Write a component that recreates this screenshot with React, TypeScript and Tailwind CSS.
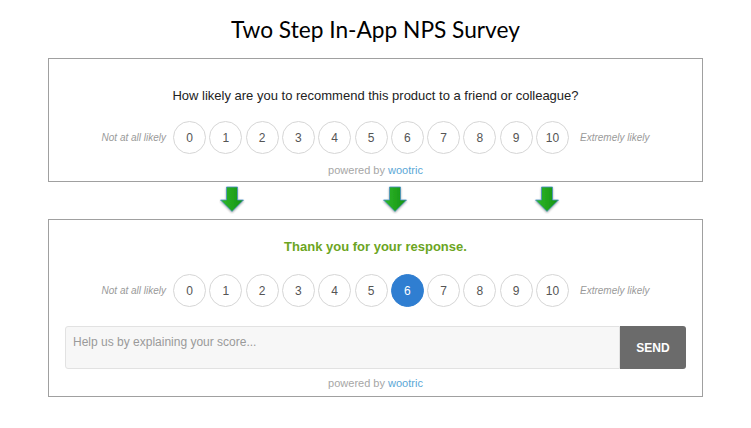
import React from "react";

const scores = [0, 1, 2, 3, 4, 5, 6, 7, 8, 9, 10];

function Scale({ selected }: { selected?: number }) {
  return (
    <div className="flex items-center justify-center">
      <span className="mr-[7px] text-[10px] italic text-[#9a9a9a]">Not at all likely</span>
      <div className="flex gap-[3.3px]">
        {scores.map((n) => (
          <div
            key={n}
            className={
              n === selected
                ? "flex h-[33px] w-[33px] items-center justify-center rounded-full border border-[#2f7ed1] bg-[#2f7ed1] text-[12px] text-white"
                : "flex h-[33px] w-[33px] items-center justify-center rounded-full border border-[#d6d6d6] bg-white text-[12px] text-[#555]"
            }
          >
            {n}
          </div>
        ))}
      </div>
      <span className="ml-[11px] text-[10px] italic text-[#9a9a9a]">Extremely likely</span>
    </div>
  );
}

function Powered() {
  return (
    <p className="text-center text-[11px] text-[#a6a6a6]">
      powered by <span className="text-[#5aa7d6]">wootric</span>
    </p>
  );
}

function Arrow() {
  return (
    <svg width="26" height="28" viewBox="0 0 26 28">
      <defs>
        <linearGradient id="g" x1="0" x2="1" y1="0" y2="0">
          <stop offset="0" stopColor="#2fb82a" />
          <stop offset="1" stopColor="#159212" />
        </linearGradient>
        <filter id="s" x="-30%" y="-30%" width="160%" height="160%">
          <feDropShadow dx="0" dy="1" stdDeviation="0.8" floodColor="#000" floodOpacity="0.35" />
        </filter>
      </defs>
      <path
        d="M7.5 1 H18.5 V14 H24.5 L13 25.5 L1.5 14 H7.5 Z"
        fill="url(#g)"
        stroke="#4a8fc4"
        strokeWidth="0.8"
        filter="url(#s)"
      />
    </svg>
  );
}

export default function App() {
  return (
    <div className="flex h-[428px] w-[751px] flex-col items-center bg-white font-['Liberation_Sans',Arial,sans-serif]">
      <h1 className="mt-[14px] font-['Lato','Open_Sans',sans-serif] text-[22.7px] leading-[32px] text-black">
        Two Step In-App NPS Survey
      </h1>

      <section className="mt-[12px] flex h-[124px] w-[655px] flex-col border border-[#a0a0a0] pt-[28px]">
        <p className="text-center text-[13px] leading-[18px] text-[#222]">
          How likely are you to recommend this product to a friend or colleague?
        </p>
        <div className="mt-[16px]">
          <Scale />
        </div>
        <div className="mt-[8px]">
          <Powered />
        </div>
      </section>

      <div className="flex w-[655px] pt-[4px] pb-[5px]">
        <div className="ml-[171px]">
          <Arrow />
        </div>
        <div className="ml-[137px]">
          <Arrow />
        </div>
        <div className="ml-[126px]">
          <Arrow />
        </div>
      </div>

      <section className="flex h-[178px] w-[655px] flex-col border border-[#a0a0a0] px-[16px] pt-[18px]">
        <p className="text-center text-[13px] font-bold leading-[18px] text-[#6ca523]">
          Thank you for your response.
        </p>
        <div className="mt-[18px]">
          <Scale selected={6} />
        </div>
        <div className="mt-[19px] flex h-[43px]">
          <div className="flex-1 rounded-l-[3px] border border-[#e2e2e2] bg-[#f7f7f7] px-[7px] pt-[6px] text-[12px] text-[#9a9a9a]">
            Help us by explaining your score...
          </div>
          <button className="w-[66px] rounded-r-[3px] bg-[#6b6b6b] text-[12px] font-bold text-white">
            SEND
          </button>
        </div>
        <div className="mt-[6px]">
          <Powered />
        </div>
      </section>
    </div>
  );
}
